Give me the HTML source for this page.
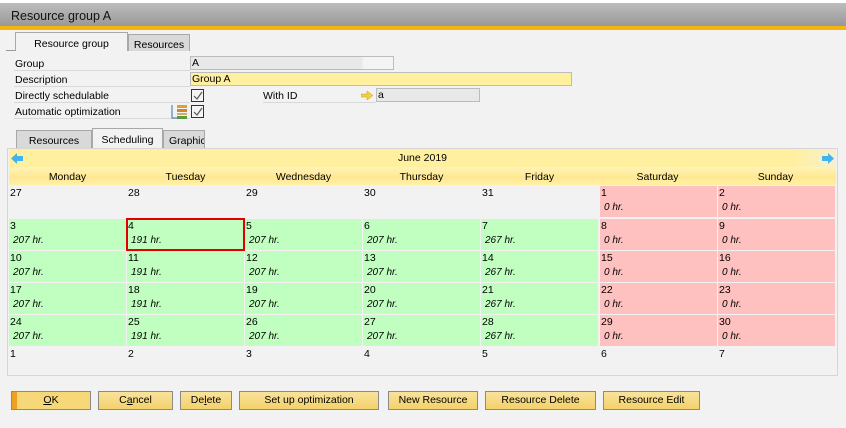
<!DOCTYPE html>
<html><head><meta charset="utf-8"><style>
*{box-sizing:border-box;margin:0;padding:0}
body{width:846px;height:428px;background:#f2f2f2;font-family:"Liberation Sans",sans-serif;font-size:10.5px;color:#000;position:relative;overflow:hidden}
.a{position:absolute}
.title{left:0;top:3px;width:846px;height:24px;background:linear-gradient(#bdbdbd,#979797);font-size:12.5px;padding:6px 0 0 11px;color:#111}
.orange{left:0;top:26px;width:846px;height:4px;background:#f5b50e}
.tab{position:absolute;border:1px solid #a8a8a8;border-bottom:none;background:#d9d9d9;text-align:center;padding-top:4px}
.lbl{position:absolute;left:14px;width:176px;height:15px;border-bottom:1px solid #d8d8d8;padding-left:1px;padding-top:2px}
.fld{position:absolute;height:14px;border:1px solid #bcbcbc;background:#e8e8e8;padding-left:1px;line-height:13px}
.cb{position:absolute;width:13px;height:13px;border:1px solid #333;background:#f4f4f4}
.cal{left:7px;top:148px;width:831px;height:228px;border:1px solid #d6d6d6;background:#f2f2f2}
.c{position:absolute;width:117px;height:31px;padding:2px 0 0 1px;line-height:11px}
.g{background:#c0ffc0}.r{background:#ffc0c0}
.h{display:block;font-style:italic;margin:3px 0 0 3px;font-size:10px}
.btn{position:absolute;top:391px;height:19px;border:1px solid #8a8a8a;background:linear-gradient(#f9e39b,#f3d26b);text-align:center;line-height:17px}
</style></head><body>
<div class="a" style="left:0;top:0;width:846px;height:3px;background:#fff"></div>
<div class="a title">Resource group A</div>
<div class="a orange"></div>
<div class="a" style="left:6px;top:50px;width:10px;height:1px;background:#999"></div>
<div class="tab" style="left:15px;top:32px;width:113px;height:19px;background:#f2f2f2;padding-top:5px">Resource group</div>
<div class="tab" style="left:128px;top:34px;width:62px;height:17px">Resources</div>
<div class="lbl" style="top:56px">Group</div>
<div class="lbl" style="top:72px">Description</div>
<div class="lbl" style="top:88px">Directly schedulable</div>
<div class="lbl" style="top:104px">Automatic optimization</div>
<div class="fld" style="left:190px;top:56px;width:204px;background:linear-gradient(90deg,#e8e8e8 85%,#f4f4f4 85%)">A</div>
<div class="fld" style="left:190px;top:72px;width:382px;background:#fff0a0">Group A</div>
<div class="cb" style="left:191px;top:89px"><svg width="11" height="11"><path d="M2 6l3 3 5-7" stroke="#555" fill="none" stroke-width="1.2"/></svg></div>
<div class="cb" style="left:191px;top:105px"><svg width="11" height="11"><path d="M2 6l3 3 5-7" stroke="#555" fill="none" stroke-width="1.2"/></svg></div>
<div class="a" style="left:263px;top:88px;width:113px;height:15px;border-bottom:1px solid #d8d8d8;padding-top:2px">With ID</div>
<svg class="a" style="left:361px;top:91px" width="12" height="9"><path d="M0 3h6V0l6 4.5L6 9V6H0z" fill="#f0d040" stroke="#c8a020" stroke-width=".5"/></svg>
<div class="fld" style="left:376px;top:88px;width:104px">a</div>
<svg class="a" style="left:171px;top:104px" width="18" height="16"><path d="M1 1v13h5" stroke="#2a6fc0" fill="none"/><rect x="6" y="1" width="10" height="3" fill="#e0a030"/><rect x="6" y="5" width="10" height="3" fill="#d08830"/><rect x="6" y="9" width="10" height="2" fill="#d0b060"/><rect x="6" y="12" width="10" height="3" fill="#5a9a40"/></svg>
<div class="tab" style="left:16px;top:130px;width:76px;height:18px">Resources</div>
<div class="tab" style="left:92px;top:128px;width:71px;height:20px;background:#f2f2f2;padding-top:5px">Scheduling</div>
<div class="tab" style="left:163px;top:130px;width:42px;height:18px;overflow:hidden;text-align:left;padding-left:5px">Graphic</div>
<div class="a cal"></div>
<div class="a" style="left:9px;top:149px;width:827px;height:18px;background:linear-gradient(90deg,#fff0a0 95%,#f6f0d0);text-align:center;padding-top:3px">June 2019</div>
<svg class="a" style="left:11px;top:153px" width="12" height="11"><path d="M0 5.5L6 0v3h6v5H6v3z" fill="#3fb4f0"/></svg>
<svg class="a" style="left:822px;top:153px" width="12" height="11"><path d="M12 5.5L6 0v3H0v5h6v3z" fill="#3fb4f0"/></svg>
<div class="a" style="left:9px;top:167px;width:827px;height:18px;background:linear-gradient(#fff3b8,#ffe890 60%,#fff0a8);"></div>
<div class="a" style="left:9px;top:171px;width:117px;text-align:center">Monday</div>
<div class="a" style="left:127px;top:171px;width:117px;text-align:center">Tuesday</div>
<div class="a" style="left:245px;top:171px;width:117px;text-align:center">Wednesday</div>
<div class="a" style="left:363px;top:171px;width:117px;text-align:center">Thursday</div>
<div class="a" style="left:481px;top:171px;width:117px;text-align:center">Friday</div>
<div class="a" style="left:599px;top:171px;width:117px;text-align:center">Saturday</div>
<div class="a" style="left:717px;top:171px;width:117px;text-align:center">Sunday</div>

<div class="c" style="left:9px;top:186px">27</div>
<div class="c" style="left:127px;top:186px">28</div>
<div class="c" style="left:245px;top:186px">29</div>
<div class="c" style="left:363px;top:186px">30</div>
<div class="c" style="left:481px;top:186px">31</div>
<div class="c r" style="left:600px;top:186px">1<span class="h">0 hr.</span></div>
<div class="c r" style="left:718px;top:186px">2<span class="h">0 hr.</span></div>

<div class="c g" style="left:9px;top:219px">3<span class="h">207 hr.</span></div>
<div class="c g" style="left:127px;top:219px">4<span class="h">191 hr.</span></div>
<div class="c g" style="left:245px;top:219px">5<span class="h">207 hr.</span></div>
<div class="c g" style="left:363px;top:219px">6<span class="h">207 hr.</span></div>
<div class="c g" style="left:481px;top:219px">7<span class="h">267 hr.</span></div>
<div class="c r" style="left:600px;top:219px">8<span class="h">0 hr.</span></div>
<div class="c r" style="left:718px;top:219px">9<span class="h">0 hr.</span></div>
<div class="a" style="left:126px;top:218px;width:119px;height:33px;border:2px solid #e00000"></div>

<div class="c g" style="left:9px;top:251px">10<span class="h">207 hr.</span></div>
<div class="c g" style="left:127px;top:251px">11<span class="h">191 hr.</span></div>
<div class="c g" style="left:245px;top:251px">12<span class="h">207 hr.</span></div>
<div class="c g" style="left:363px;top:251px">13<span class="h">207 hr.</span></div>
<div class="c g" style="left:481px;top:251px">14<span class="h">267 hr.</span></div>
<div class="c r" style="left:600px;top:251px">15<span class="h">0 hr.</span></div>
<div class="c r" style="left:718px;top:251px">16<span class="h">0 hr.</span></div>

<div class="c g" style="left:9px;top:283px">17<span class="h">207 hr.</span></div>
<div class="c g" style="left:127px;top:283px">18<span class="h">191 hr.</span></div>
<div class="c g" style="left:245px;top:283px">19<span class="h">207 hr.</span></div>
<div class="c g" style="left:363px;top:283px">20<span class="h">207 hr.</span></div>
<div class="c g" style="left:481px;top:283px">21<span class="h">267 hr.</span></div>
<div class="c r" style="left:600px;top:283px">22<span class="h">0 hr.</span></div>
<div class="c r" style="left:718px;top:283px">23<span class="h">0 hr.</span></div>

<div class="c g" style="left:9px;top:315px">24<span class="h">207 hr.</span></div>
<div class="c g" style="left:127px;top:315px">25<span class="h">191 hr.</span></div>
<div class="c g" style="left:245px;top:315px">26<span class="h">207 hr.</span></div>
<div class="c g" style="left:363px;top:315px">27<span class="h">207 hr.</span></div>
<div class="c g" style="left:481px;top:315px">28<span class="h">267 hr.</span></div>
<div class="c r" style="left:600px;top:315px">29<span class="h">0 hr.</span></div>
<div class="c r" style="left:718px;top:315px">30<span class="h">0 hr.</span></div>

<div class="c" style="left:9px;top:347px">1</div>
<div class="c" style="left:127px;top:347px">2</div>
<div class="c" style="left:245px;top:347px">3</div>
<div class="c" style="left:363px;top:347px">4</div>
<div class="c" style="left:481px;top:347px">5</div>
<div class="c" style="left:600px;top:347px">6</div>
<div class="c" style="left:718px;top:347px">7</div>

<div class="btn" style="left:11px;width:80px;background:linear-gradient(90deg,#f0a020 0,#f0a020 5px,#f6d878 5px,#f6d878)"><u>O</u>K</div>
<div class="btn" style="left:98px;width:75px">C<u>a</u>ncel</div>
<div class="btn" style="left:180px;width:52px">De<u>l</u>ete</div>
<div class="btn" style="left:239px;width:140px">Set up optimization</div>
<div class="btn" style="left:388px;width:90px">New Resource</div>
<div class="btn" style="left:485px;width:111px">Resource Delete</div>
<div class="btn" style="left:603px;width:97px">Resource Edit</div>
</body></html>
